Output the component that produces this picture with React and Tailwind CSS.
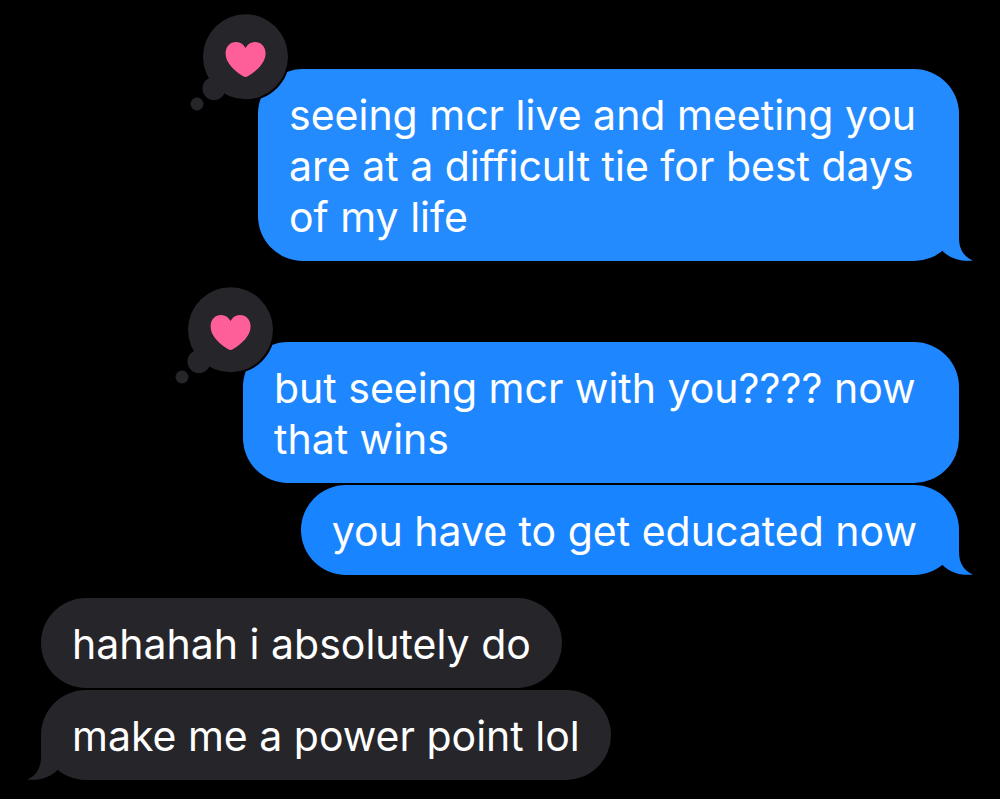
import React from 'react';
import { clsx } from 'clsx';

const messages = [
  {
    id: 1,
    from: 'me',
    text: 'seeing mcr live and meeting you are at a difficult tie for best days of my life',
    reaction: true,
    tail: true,
    className: 'w-[701px] bg-[#248bff] text-[#248bff]',
  },
  {
    id: 2,
    from: 'me',
    text: 'but seeing mcr with you???? now that wins',
    reaction: true,
    className: 'mt-[81px] w-[716px] bg-[#1e87ff] text-[#1e87ff]',
  },
  {
    id: 3,
    from: 'me',
    text: 'you have to get educated now',
    tail: true,
    className: 'mt-0.5 bg-[#1984ff] text-[#1984ff]',
  },
  {
    id: 4,
    from: 'them',
    text: 'hahahah i absolutely do',
    className: 'mt-[23px] bg-[#26252a] text-[#26252a]',
  },
  {
    id: 5,
    from: 'them',
    text: 'make me a power point lol',
    tail: true,
    className: 'mt-0.5 bg-[#26252a] text-[#26252a]',
  },
];

const Tail = ({ flip }) => (
  <svg
    viewBox="0 0 60 45"
    fill="currentColor"
    aria-hidden="true"
    className={clsx(
      'absolute bottom-0 h-[45px] w-[60px]',
      flip ? '-left-[15px] -scale-x-100' : '-right-[15px]'
    )}
  >
    <path d="M24 0 H45 V22 C45 33 50 41 59 44.5 C47 46 36 42.5 28.5 35 L24 30 Z" />
  </svg>
);

const HeartReaction = () => (
  <svg
    viewBox="0 0 104 104"
    role="img"
    aria-label="Loved"
    className="absolute -top-[59px] -left-[70px] h-[104px] w-[104px]"
  >
    <circle cx="57.5" cy="46.7" r="44.5" fill="#000" />
    <g fill="#26252a">
      <circle cx="57.5" cy="46.7" r="42.5" />
      <circle cx="26" cy="78.5" r="11.5" />
      <circle cx="9" cy="94" r="6.5" />
    </g>
    <path
      fill="#ff5f98"
      d="M57.5 38 C55.5 34 52 32 48.3 32 C42 32 37.6 36.8 37.6 43.3 C37.6 52.5 45.5 60.5 55.2 66.3 C56.9 67.3 58.1 67.3 59.8 66.3 C69.5 60.5 77.6 52.5 77.6 43.3 C77.6 36.8 73 32 66.8 32 C63 32 59.5 34 57.5 38 Z"
    />
  </svg>
);

const Message = ({ from, text, reaction, tail, className }) => (
  <li
    className={clsx(
      'relative max-w-full rounded-[45px] pt-[21px] pb-[18px] pl-[31px]',
      from === 'me' ? 'self-end pr-[42px]' : 'self-start pr-[31px]',
      className
    )}
  >
    {tail && <Tail flip={from === 'them'} />}
    <p className="relative text-[41px] leading-[51px] text-white">{text}</p>
    {reaction && <HeartReaction />}
  </li>
);

const App = () => (
  <main className="min-h-screen bg-black px-[41px] pt-[69px] pb-[18px] font-['Inter','Liberation_Sans',sans-serif]">
    <ul className="flex flex-col">
      {messages.map((message) => (
        <Message key={message.id} {...message} />
      ))}
    </ul>
  </main>
);

export default App;
